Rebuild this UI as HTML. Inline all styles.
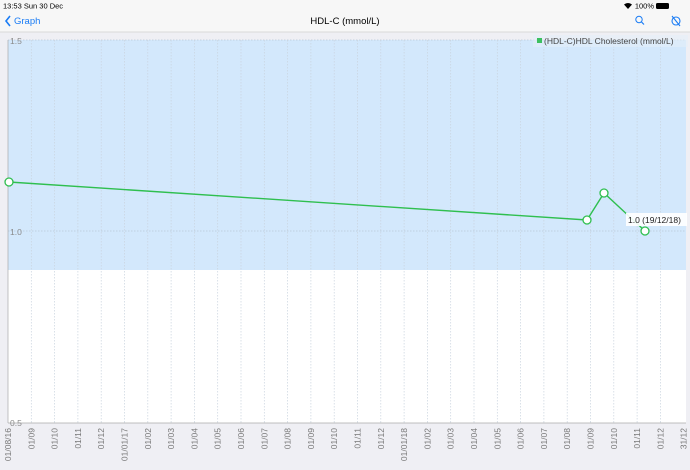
<!DOCTYPE html>
<html><head><meta charset="utf-8"><style>
html,body{margin:0;padding:0;width:690px;height:470px;overflow:hidden;background:#efeff4;font-family:"Liberation Sans",sans-serif}
</style></head><body>
<svg width="690" height="470" xmlns="http://www.w3.org/2000/svg" font-family="Liberation Sans, sans-serif">
<rect x="0" y="0" width="690" height="32" fill="#f7f7f7"/>
<line x1="0" y1="32" x2="690" y2="32" stroke="#d8d8d8"/>
<text x="3" y="8.5" font-size="7.5" fill="#000">13:53  Sun 30 Dec</text>
<text x="654" y="8.5" font-size="7.5" fill="#000" text-anchor="end">100%</text>
<path d="M624 4.5 q4-3 8 0 l-4 4.5z" fill="#000"/>
<rect x="656" y="3" width="13" height="6" rx="1.5" fill="#000"/>
<path d="M10 16 l-4 5 l4 5" stroke="#1a7cf5" stroke-width="1.6" fill="none"/>
<text x="14" y="24" font-size="9.5" fill="#1a7cf5">Graph</text>
<text x="345" y="24" font-size="9.5" fill="#000" text-anchor="middle">HDL-C (mmol/L)</text>
<circle cx="639" cy="19.5" r="3.2" stroke="#1a7cf5" stroke-width="1" fill="none"/>
<line x1="641.5" y1="22" x2="644" y2="24.5" stroke="#1a7cf5" stroke-width="1.2"/>
<circle cx="676" cy="21" r="4" stroke="#1a7cf5" stroke-width="1.1" fill="none"/>
<line x1="672" y1="16" x2="680" y2="26" stroke="#1a7cf5" stroke-width="1.1"/>
<rect x="8" y="40" width="678" height="383" fill="#fff"/>
<rect x="8" y="40" width="678" height="230" fill="#d3e8fc"/>
<g stroke="#b9c8d8" stroke-width="0.7" stroke-dasharray="1.5,1.5">
<line x1="8" y1="40" x2="686" y2="40"/>
<line x1="8" y1="231" x2="686" y2="231"/>
</g>
<g id="v" stroke="#c9d3de" stroke-width="0.7" stroke-dasharray="1.5,1.5"></g>
<line x1="8" y1="40" x2="8" y2="423" stroke="#aaa" stroke-width="0.7"/>
<line x1="8" y1="423" x2="686" y2="423" stroke="#aaa" stroke-width="0.7"/>
<text x="10" y="44" font-size="8.5" fill="#8a8a8a">1.5</text>
<text x="10" y="235" font-size="8.5" fill="#8a8a8a">1.0</text>
<text x="10" y="426" font-size="8.5" fill="#8a8a8a">0.5</text>
<rect x="533" y="35" width="155" height="12" fill="#e4eef8" opacity="0.6"/>
<rect x="537" y="38" width="5" height="5" fill="#3cc060"/>
<text x="544" y="44" font-size="8.5" fill="#444">(HDL-C)HDL Cholesterol  (mmol/L)</text>
<polyline points="9,182 587,220 604,193 645,231" fill="none" stroke="#2fbf4f" stroke-width="1.4"/>
<rect x="626" y="213" width="61" height="13" fill="#fff" opacity="0.9"/>
<text x="628" y="223" font-size="8.5" fill="#222">1.0  (19/12/18)</text>
<g fill="#fff" stroke="#2fbf4f" stroke-width="1.3">
<circle cx="9" cy="182" r="4"/><circle cx="587" cy="220" r="4"/><circle cx="604" cy="193" r="4"/><circle cx="645" cy="231" r="4"/>
</g>
<g id="lbl" font-size="8.5" fill="#777"></g>
</svg>
<script>
var L=["01/08/16","01/09","01/10","01/11","01/12","01/01/17","01/02","01/03","01/04","01/05","01/06","01/07","01/08","01/09","01/10","01/11","01/12","01/01/18","01/02","01/03","01/04","01/05","01/06","01/07","01/08","01/09","01/10","01/11","01/12","31/12"];
var ns="http://www.w3.org/2000/svg",v=document.getElementById("v"),g=document.getElementById("lbl");
for(var i=0;i<L.length;i++){var x=8+i*23.3;
if(i>0&&i<L.length-1){var l=document.createElementNS(ns,"line");l.setAttribute("x1",x);l.setAttribute("x2",x);l.setAttribute("y1",40);l.setAttribute("y2",423);v.appendChild(l);}
var t=document.createElementNS(ns,"text");t.setAttribute("transform","translate("+(x+3)+",428) rotate(-90)");t.setAttribute("text-anchor","end");t.textContent=L[i];g.appendChild(t);}
</script>
</body></html>
